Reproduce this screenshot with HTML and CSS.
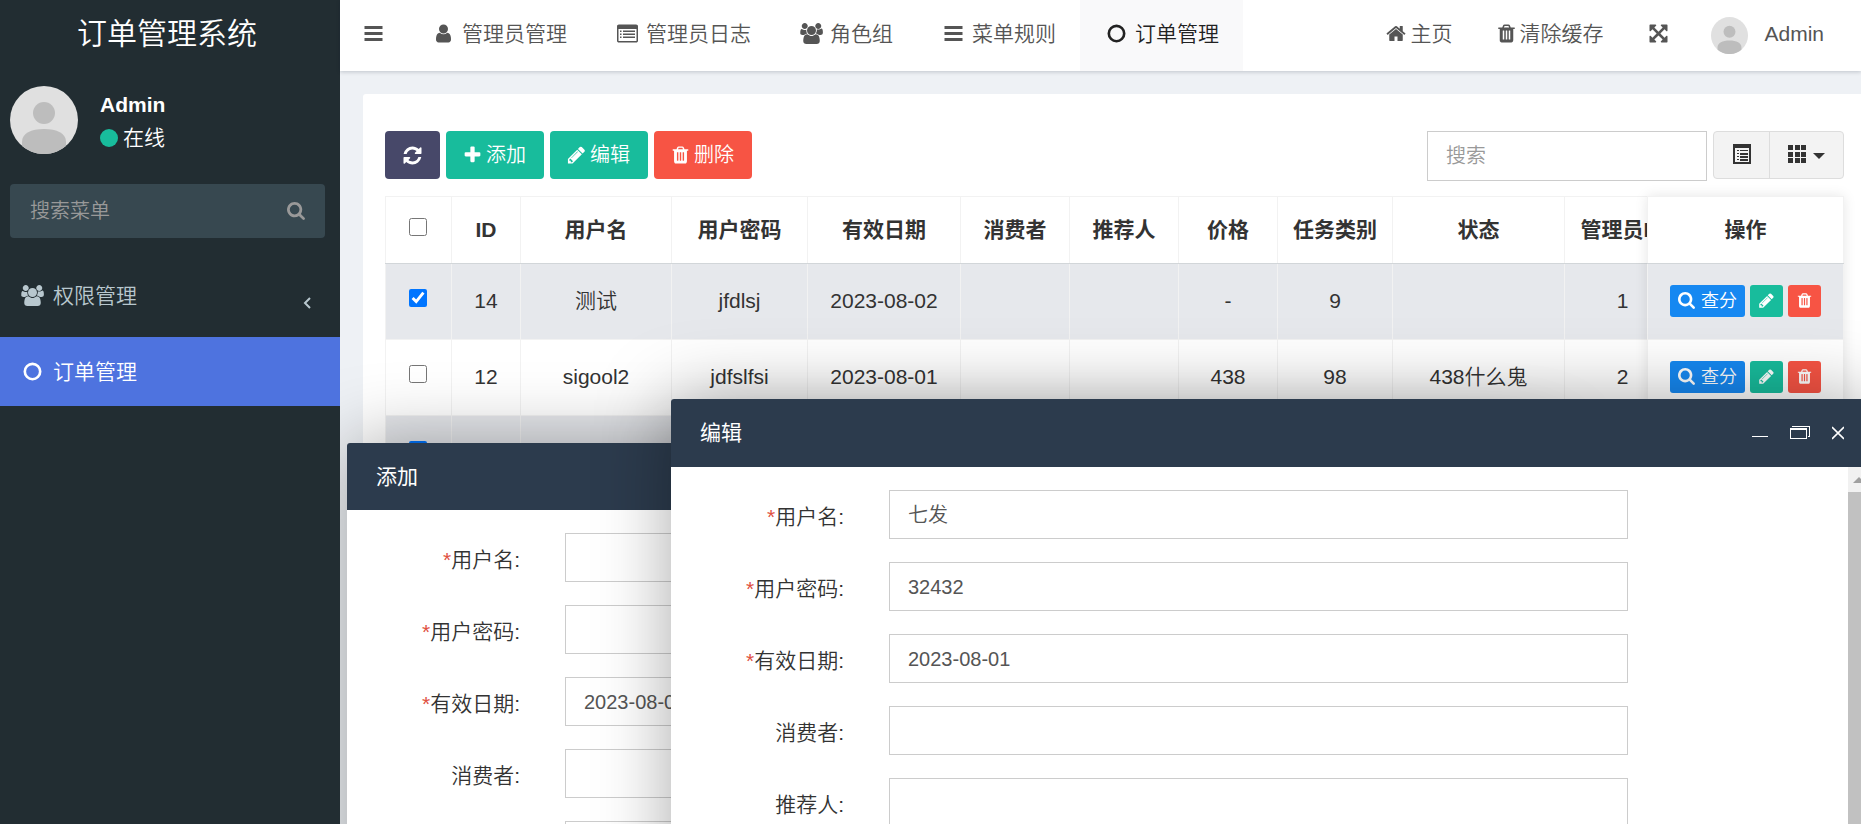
FILE: index.html
```html
<!DOCTYPE html>
<html lang="zh-CN">
<head>
<meta charset="utf-8">
<title>订单管理系统</title>
<link rel="stylesheet" href="styles.css">
</head>
<body>
<svg class="sprite" aria-hidden="true">
  <symbol id="i-bars" viewBox="0 0 1792 1792"><path d="M128 256h1536v256H128zM128 768h1536v256H128zM128 1280h1536v256H128z"/></symbol>
  <symbol id="i-user" viewBox="0 0 1792 1792"><path d="M1536 1399q0 109-62.5 187t-150.5 78h-854q-88 0-150.5-78t-62.5-187q0-85 8.5-160.5t31.5-152 58.5-131 94-89 134.5-34.5q131 128 313 128t313-128q76 0 134.5 34.5t94 89 58.5 131 31.5 152 8.5 160.5zm-256-887q0 159-112.5 271.5t-271.5 112.5-271.5-112.5-112.5-271.5 112.5-271.5 271.5-112.5 271.5 112.5 112.5 271.5z"/></symbol>
  <symbol id="i-list" viewBox="0 0 1792 1792"><path fill-rule="evenodd" d="M160 128h1472q66 0 113 47t47 113v1216q0 66-47 113t-113 47H160q-66 0-113-47T0 1504V288q0-66 47-113t113-47zM128 512v992q0 32 32 32h1472q32 0 32-32V512zM256 640h128v128H256zM512 640h1024v128H512zM256 896h128v128H256zM512 896h1024v128H512zM256 1152h128v128H256zM512 1152h1024v128H512z"/></symbol>
  <symbol id="i-group" viewBox="64 0 1920 1792"><path d="M657 896q-162 5-265 128h-134q-82 0-138-40.5t-56-118.5q0-353 124-353 6 0 43.5 21t97.5 42.5 119 21.5q67 0 133-23-5 37-5 66 0 159 93 295zm1071 637q0 120-73 189.5t-194 69.5h-874q-121 0-194-69.5t-73-189.5q0-53 3.5-103.5t14-109 26.5-108.5 43-97.5 62-81 85.5-53.5 111.5-20q10 0 43 21.5t73 48 107 48 135 21.5 135-21.5 107-48 73-48 43-21.5q61 0 111.5 20t85.5 53.5 62 81 43 97.5 26.5 108.5 14 109 3.5 103.5zm-1024-1277q0 106-75 181t-181 75-181-75-75-181 75-181 181-75 181 75 75 181zm704 384q0 159-112.5 271.5t-271.5 112.5-271.5-112.5-112.5-271.5 112.5-271.5 271.5-112.5 271.5 112.5 112.5 271.5zm576 225q0 78-56 118.5t-138 40.5h-134q-103-123-265-128 93-136 93-295 0-29-5-66 66 23 133 23 59 0 119-21.5t97.5-42.5 43.5-21q124 0 124 353zm-128-609q0 106-75 181t-181 75-181-75-75-181 75-181 181-75 181 75 75 181z"/></symbol>
  <symbol id="i-circle" viewBox="0 0 1792 1792"><circle cx="896" cy="896" r="656" fill="none" stroke="currentColor" stroke-width="224"/></symbol>
  <symbol id="i-home" viewBox="64 0 1664 1792"><path d="M1472 992v480q0 26-19 45t-45 19h-384v-384h-256v384h-384q-26 0-45-19t-19-45v-480q0-1 .5-3t.5-3l575-474 575 474q1 2 1 6zm223-69l-62 74q-8 9-21 11h-3q-13 0-21-7l-692-577-692 577q-12 8-24 7-13-2-21-11l-62-74q-8-10-7-23.5t11-21.5l719-599q32-26 76-26t76 26l244 204v-195q0-14 9-23t23-9h192q14 0 23 9t9 23v408l219 182q10 8 11 21.5t-7 23.5z"/></symbol>
  <symbol id="i-trash" viewBox="192 0 1408 1792"><path d="M704 1376v-704q0-14-9-23t-23-9h-64q-14 0-23 9t-9 23v704q0 14 9 23t23 9h64q14 0 23-9t9-23zm256 0v-704q0-14-9-23t-23-9h-64q-14 0-23 9t-9 23v704q0 14 9 23t23 9h64q14 0 23-9t9-23zm256 0v-704q0-14-9-23t-23-9h-64q-14 0-23 9t-9 23v704q0 14 9 23t23 9h64q14 0 23-9t9-23zm-544-992h448l-48-117q-7-9-17-11h-317q-10 2-17 11zm928 32v64q0 14-9 23t-23 9h-96v948q0 83-47 143.5t-113 60.5h-832q-66 0-113-58.5t-47-141.5v-952h-96q-14 0-23-9t-9-23v-64q0-14 9-23t23-9h309l70-167q15-37 54-63t79-26h320q40 0 79 26t54 63l70 167h309q14 0 23 9t9 23z"/></symbol>
  <symbol id="i-arrows" viewBox="0 0 1792 1792"><path d="M1411 541l-355 355 355 355 144-144q29-31 70-14 39 17 39 59v448q0 26-19 45t-45 19h-448q-42 0-59-40-17-39 14-69l144-144-355-355-355 355 144 144q31 30 14 69-17 40-59 40h-448q-26 0-45-19t-19-45v-448q0-42 40-59 39-17 69 14l144 144 355-355-355-355-144 144q-19 19-45 19-12 0-24-5-40-17-40-59v-448q0-26 19-45t45-19h448q42 0 59 40 17 39-14 69l-144 144 355 355 355-355-144-144q-31-30-14-69 17-40 59-40h448q26 0 45 19t19 45v448q0 42-39 59-13 5-25 5-26 0-45-19z"/></symbol>
  <symbol id="i-search" viewBox="64 128 1664 1664"><path d="M1216 832q0-185-131.5-316.5t-316.5-131.5-316.5 131.5-131.5 316.5 131.5 316.5 316.5 131.5 316.5-131.5 131.5-316.5zm512 832q0 52-38 90t-90 38q-54 0-90-38l-343-342q-179 124-399 124-143 0-273.5-55.5t-225-150-150-225-55.5-273.5 55.5-273.5 150-225 225-150 273.5-55.5 273.5 55.5 225 150 150 225 55.5 273.5q0 220-124 399l343 343q37 37 37 90z"/></symbol>
  <symbol id="i-refresh" viewBox="0 0 1792 1792"><path d="M1639 1056q0 5-1 7-64 268-268 434.5t-478 166.5q-146 0-282.5-55t-243.5-157l-129 129q-19 19-45 19t-45-19-19-45v-448q0-26 19-45t45-19h448q26 0 45 19t19 45-19 45l-137 137q71 66 161 102t187 36q134 0 250-65t186-179q11-17 53-117 8-23 30-23h192q13 0 22.5 9.5t9.5 22.5zm25-800v448q0 26-19 45t-45 19h-448q-26 0-45-19t-19-45 19-45l138-138q-148-137-349-137-134 0-250 65t-186 179q-11 17-53 117-8 23-30 23h-199q-13 0-22.5-9.5t-9.5-22.5v-7q65-268 270-434.5t480-166.5q146 0 284 55.5t245 156.5l130-129q19-19 45-19t45 19 19 45z"/></symbol>
  <symbol id="i-plus" viewBox="192 0 1408 1792"><path d="M1600 736v192q0 40-28 68t-68 28h-416v416q0 40-28 68t-68 28h-192q-40 0-68-28t-28-68v-416h-416q-40 0-68-28t-28-68v-192q0-40 28-68t68-28h416v-416q0-40 28-68t68-28h192q40 0 68 28t28 68v416h416q40 0 68 28t28 68z"/></symbol>
  <symbol id="i-pencil" viewBox="128 0 1536 1792"><path d="M491 1536l91-91-235-235-91 91v107h128v128h107zm523-928q0-22-22-22-10 0-17 7l-542 542q-7 7-7 17 0 22 22 22 10 0 17-7l542-542q7-7 7-17zm-54-192l416 416-832 832h-416v-416zm683 96q0 53-37 90l-166 166-416-416 166-165q36-38 90-38 53 0 91 38l235 234q37 39 37 91z"/></symbol>
  <symbol id="i-avatar" viewBox="0 0 68 68"><circle cx="34" cy="34" r="34" fill="#e0e0e0"/><circle cx="34" cy="27" r="11" fill="#bdbdbd"/><path fill="#bdbdbd" d="M12 60V56C12 47 21 43 34 43s22 4 22 13v4A34 34 0 0 1 12 60z"/></symbol>
</svg>

<div class="app">
  <aside class="sidebar">
    <a class="logo" href="#">订单管理系统</a>
    <div class="user-panel">
      <svg class="user-avatar"><use href="#i-avatar"/></svg>
      <div class="user-info">
        <strong>Admin</strong>
        <span class="online"><i class="dot"></i>在线</span>
      </div>
    </div>
    <form class="side-search">
      <input type="text" placeholder="搜索菜单" aria-label="搜索菜单">
      <button type="button" aria-label="搜索"><svg class="icon-s"><use href="#i-search"/></svg></button>
    </form>
    <nav class="side-menu">
      <a href="#"><svg class="icon-fw"><use href="#i-group"/></svg><span>权限管理</span>
        <svg class="chevron" viewBox="0 0 8 12"><path d="M7 1L2 6l5 5" fill="none" stroke="currentColor" stroke-width="2"/></svg></a>
      <a href="#" class="active"><svg class="icon-fw"><use href="#i-circle"/></svg><span>订单管理</span></a>
    </nav>
  </aside>

  <div class="page">
    <header class="topbar">
      <button type="button" class="nav-item toggle" aria-label="切换菜单"><svg class="icon"><use href="#i-bars"/></svg></button>
      <nav class="tabs">
        <a class="nav-item" href="#"><svg class="icon-fw"><use href="#i-user"/></svg>管理员管理</a>
        <a class="nav-item" href="#"><svg class="icon-fw"><use href="#i-list"/></svg>管理员日志</a>
        <a class="nav-item" href="#"><svg class="icon-fw"><use href="#i-group"/></svg>角色组</a>
        <a class="nav-item" href="#"><svg class="icon-fw"><use href="#i-bars"/></svg>菜单规则</a>
        <a class="nav-item active" href="#"><svg class="icon-fw"><use href="#i-circle"/></svg>订单管理</a>
      </nav>
      <nav class="tools">
        <a class="nav-item" href="#"><svg class="icon-home"><use href="#i-home"/></svg>主页</a>
        <a class="nav-item" href="#"><svg class="icon-trash"><use href="#i-trash"/></svg>清除缓存</a>
        <a class="nav-item" href="#" aria-label="全屏"><svg class="icon"><use href="#i-arrows"/></svg></a>
        <a class="nav-item account" href="#"><svg class="account-avatar"><use href="#i-avatar"/></svg>Admin</a>
      </nav>
    </header>

    <main class="content">
      <section class="panel">
        <div class="toolbar">
          <div class="actions">
            <button type="button" class="btn primary" aria-label="刷新"><svg class="icon"><use href="#i-refresh"/></svg></button>
            <button type="button" class="btn success"><svg class="icon-m"><use href="#i-plus"/></svg>添加</button>
            <button type="button" class="btn success"><svg class="icon-m"><use href="#i-pencil"/></svg>编辑</button>
            <button type="button" class="btn danger"><svg class="icon-m"><use href="#i-trash"/></svg>删除</button>
          </div>
          <div class="filters">
            <input type="text" class="search" placeholder="搜索" aria-label="搜索">
            <div class="btn-group">
              <button type="button" aria-label="切换视图"><svg class="view-icon" viewBox="0 0 18 20"><path fill-rule="evenodd" d="M0 0h18v20H0zM2 4v14h14V4zM4 6h2v1H4zM7 6h8v1H7zM4 9h2v1H4zM7 9h8v2H7zM4 12h2v1H4zM7 12h8v2H7zM4 15h2v1H4zM7 15h8v2H7z"/></svg></button>
              <button type="button" aria-label="列"><svg class="grid-icon" viewBox="0 0 18 18"><path d="M0 0h5v5H0zM7 0h5v5H7zM13 0h5v5h-5zM0 7h5v5H0zM7 7h5v5H7zM13 7h5v5h-5zM0 13h5v5H0zM7 13h5v5H7zM13 13h5v5h-5z"/></svg><svg class="caret" viewBox="0 0 12 6"><path d="M0 0h12L6 6z"/></svg></button>
            </div>
          </div>
        </div>

        <div class="table-wrap">
          <div class="table-scroll">
            <table class="grid">
              <colgroup><col class="w-check"><col class="w-id"><col class="w-name"><col class="w-pass"><col class="w-date"><col class="w-person"><col class="w-person"><col class="w-price"><col class="w-type"><col class="w-state"><col class="w-admin"></colgroup>
              <thead>
                <tr><th><input type="checkbox" aria-label="全选"></th><th>ID</th><th>用户名</th><th>用户密码</th><th>有效日期</th><th>消费者</th><th>推荐人</th><th>价格</th><th>任务类别</th><th>状态</th><th>管理员ID</th></tr>
              </thead>
              <tbody>
                <tr class="selected"><td><input type="checkbox" checked aria-label="选择 14"></td><td>14</td><td>测试</td><td>jfdlsj</td><td>2023-08-02</td><td></td><td></td><td>-</td><td>9</td><td></td><td>1</td></tr>
                <tr><td><input type="checkbox" aria-label="选择 12"></td><td>12</td><td>sigool2</td><td>jdfslfsi</td><td>2023-08-01</td><td></td><td></td><td>438</td><td>98</td><td>438什么鬼</td><td>2</td></tr>
                <tr class="selected"><td><input type="checkbox" checked aria-label="选择"></td><td></td><td></td><td></td><td></td><td></td><td></td><td></td><td></td><td></td><td></td></tr>
              </tbody>
            </table>
          </div>
          <table class="grid fixed">
            <thead><tr><th>操作</th></tr></thead>
            <tbody>
              <tr class="selected"><td><div class="row-actions"><button type="button" class="btn-xs info"><svg><use href="#i-search"/></svg>查分</button><button type="button" class="btn-xs success" aria-label="编辑"><svg><use href="#i-pencil"/></svg></button><button type="button" class="btn-xs danger" aria-label="删除"><svg><use href="#i-trash"/></svg></button></div></td></tr>
              <tr><td><div class="row-actions"><button type="button" class="btn-xs info"><svg><use href="#i-search"/></svg>查分</button><button type="button" class="btn-xs success" aria-label="编辑"><svg><use href="#i-pencil"/></svg></button><button type="button" class="btn-xs danger" aria-label="删除"><svg><use href="#i-trash"/></svg></button></div></td></tr>
              <tr class="selected"><td></td></tr>
            </tbody>
          </table>
        </div>
      </section>

      <section class="dialog dialog-add">
        <header class="dialog-head"><h2>添加</h2></header>
        <div class="dialog-body">
          <form class="form">
            <label for="a1"><i>*</i>用户名:</label><input id="a1" type="text">
            <label for="a2"><i>*</i>用户密码:</label><input id="a2" type="text">
            <label for="a3"><i>*</i>有效日期:</label><input id="a3" type="text" value="2023-08-01">
            <label for="a4">消费者:</label><input id="a4" type="text">
            <label for="a5"></label><input id="a5" type="text">
          </form>
        </div>
      </section>

      <section class="dialog dialog-edit">
        <header class="dialog-head">
          <h2>编辑</h2>
          <div class="window-buttons">
            <button type="button" aria-label="最小化"><svg width="16" height="14" viewBox="0 0 16 14"><path d="M0 10h16v1H0z"/></svg></button>
            <button type="button" aria-label="还原"><svg width="20" height="14" viewBox="0 0 20 14"><path fill-rule="evenodd" d="M0 2h17v11H0zM1 4v8h15V4zM2 0h18v11h-2v-1h1V1H2z"/></svg></button>
            <button type="button" aria-label="关闭"><svg width="12" height="14" viewBox="0 0 12 14"><path d="M0 1l12 12M12 1L0 13" fill="none" stroke="currentColor" stroke-width="1.6"/></svg></button>
          </div>
        </header>
        <div class="dialog-body">
          <form class="form">
            <label for="e1"><i>*</i>用户名:</label><input id="e1" type="text" value="七发">
            <label for="e2"><i>*</i>用户密码:</label><input id="e2" type="text" value="32432">
            <label for="e3"><i>*</i>有效日期:</label><input id="e3" type="text" value="2023-08-01">
            <label for="e4">消费者:</label><input id="e4" type="text">
            <label for="e5">推荐人:</label><input id="e5" type="text">
          </form>
          <div class="scrollbar" aria-hidden="true">
            <svg width="25" height="25" viewBox="0 0 25 25"><path d="M5 16l6-6 6 6z"/></svg>
            <div class="thumb"></div>
          </div>
        </div>
      </section>
    </main>
  </div>
</div>
</body>
</html>
```

FILE: styles.css
```css
* { box-sizing: border-box; }

body {
  margin: 0;
  font: 350 21px/30px "Liberation Sans", "Noto Sans CJK SC", sans-serif;
  color: #333;
}

a { color: inherit; text-decoration: none; }
button, input { font: inherit; }
button { margin: 0; padding: 0; border: 0; background: none; color: inherit; }
svg { flex: none; fill: currentColor; }

.sprite { display: none; }

.app { display: flex; height: 100vh; overflow: hidden; }

/* Sidebar */
.sidebar { flex: none; width: 340px; background: #222d32; color: #fff; }
.logo { display: flex; align-items: center; justify-content: center; height: 68px; padding-right: 6px; font-size: 30px; }
.user-panel { display: flex; gap: 22px; padding: 18px 10px 30px; }
.user-avatar { width: 68px; height: 68px; }
.user-info { display: flex; flex-direction: column; gap: 3px; padding-top: 4px; }
.user-info strong { font-weight: 700; }
.online { display: flex; align-items: center; gap: 5px; }
.dot { width: 18px; height: 18px; border-radius: 50%; background: #18bc9c; }
.side-search { display: flex; align-items: center; height: 54px; margin: 0 15px 30px 10px; padding: 0 20px; border-radius: 4px; background: #374850; color: #999; }
.side-search input { flex: 1; min-width: 0; padding: 0; border: 0; outline: 0; background: none; color: #fff; font-size: 20px; }
.side-search button { display: flex; }
.side-search input::placeholder { color: #999; }
.side-menu a { display: flex; align-items: center; gap: 7px; height: 69px; padding: 0 29px 0 19px; color: #b8c7ce; }
.side-menu a:first-child { padding-bottom: 14px; }
.side-menu a.active { background: #4e73df; color: #fff; }
.side-menu .chevron { width: 8px; height: 12px; margin: 14px 0 0 auto; }

.icon { width: 21px; height: 21px; }
.icon-fw { width: 27px; height: 21px; }
.icon-s { width: 18px; height: 18px; }
.icon-m { width: 19px; height: 20px; }
.icon-home { width: 20px; height: 21px; }
.icon-trash { width: 17px; height: 21px; }

/* Top bar */
.page { flex: 1; min-width: 0; display: flex; flex-direction: column; }
.topbar { position: relative; z-index: 1; flex: none; display: flex; height: 71px; background: #fff; color: #555; box-shadow: 0 1px 4px rgba(0, 21, 41, .2); }
.tabs, .tools { display: flex; }
.tools { margin-left: auto; }
.nav-item { display: flex; align-items: center; gap: 5px; padding: 0 23px 4px; white-space: nowrap; }
.tabs .nav-item { padding-right: 24px; }
.tools .nav-item { gap: 4px; }
.tabs .active { background: #f9f9fa; color: #222; }
.tools .nav-item:nth-child(3) { padding-left: 22px; }
.tools .account { gap: 16px; padding: 0 37px 4px 19px; }
.account-avatar { width: 37px; height: 37px; margin-top: 4px; }

/* List panel */
.content { position: relative; flex: 1; min-height: 0; overflow: hidden; padding: 23px 0 0 23px; background: #eef1f5; }
.panel { height: 100%; padding: 37px 17px 0 22px; border-top-left-radius: 3px; background: #fff; }
.toolbar { display: flex; justify-content: space-between; height: 65px; }
.actions, .filters { display: flex; align-items: flex-start; gap: 6px; }
.btn { display: flex; align-items: center; gap: 4px; height: 48px; padding: 0 18px 0 17px; border-radius: 4px; color: #fff; font-size: 20px; }
.btn.primary { padding: 0 17px; }
.primary { background: #474869; }
.success { background: #18bc9c; }
.danger { background: #f75444; }
.info { background: #1688f1; }
.search { width: 280px; height: 50px; padding: 0 18px; border: 1px solid #ccc; font-size: 20px; }
.search::placeholder { color: #999; }
.btn-group { display: flex; height: 48px; border: 1px solid #ddd; border-radius: 4px; background: #f3f3f3; }
.btn-group button { display: flex; align-items: center; gap: 7px; padding: 0 18px 3px 19px; }
.btn-group button + button { padding-left: 18px; border-left: 1px solid #ddd; }
.view-icon { width: 18px; height: 20px; }
.grid-icon { width: 18px; height: 18px; }
.caret { width: 12px; height: 6px; margin-top: 4px; }

.table-wrap { display: flex; }
.table-scroll { flex: 1; min-width: 0; overflow: hidden; }
.grid { width: 1295px; table-layout: fixed; border-collapse: collapse; text-align: center; white-space: nowrap; }
.grid th, .grid td { padding: 0 0 2px; border: 1px solid #f2f2f2; }
.grid th { height: 67px; padding: 0; font-weight: 700; border-bottom-color: #d2d6d9; }
.grid td { height: 76px; }
.grid .selected { background: #e6e8ec; }
.grid input { width: 18px; height: 18px; margin: 0 2px 0 0; vertical-align: 1px; accent-color: #0075ff; }
.grid.fixed { position: relative; flex: none; width: 197px; background: #fff; box-shadow: 0 0 12px rgba(0, 0, 0, .1); }
.w-check { width: 66px; }
.w-id { width: 69px; }
.w-name { width: 151px; }
.w-pass { width: 136px; }
.w-date { width: 153px; }
.w-person { width: 109px; }
.w-price { width: 99px; }
.w-type { width: 115px; }
.w-state { width: 172px; }
.w-admin { width: 116px; }
.row-actions { display: flex; justify-content: center; gap: 5px; }
.btn-xs { display: flex; align-items: center; gap: 6px; height: 32px; padding: 0 8px; border-radius: 3px; color: #fff; font-size: 18px; }
.btn-xs svg { width: 17px; height: 17px; }

/* Floating dialogs */
.dialog { position: absolute; width: 1202px; height: 600px; display: flex; flex-direction: column; border-radius: 3px; background: #fff; box-shadow: 1px 1px 75px rgba(0, 0, 0, .35); }
.dialog-add { left: 7px; top: 372px; }
.dialog-edit { left: 331px; top: 328px; }
.dialog-head { flex: none; display: flex; align-items: center; justify-content: space-between; height: 67px; padding: 0 29px; border-radius: 3px 3px 0 0; background: #2c3b4d; color: #fff; }
.dialog-edit .dialog-head { height: 68px; }
.dialog-head h2 { margin: 0; font-size: 21px; font-weight: 400; }
.window-buttons { display: flex; gap: 22px; }
.window-buttons button { display: flex; }
.dialog-body { flex: 1; min-height: 0; display: flex; overflow: hidden; }
.form { flex: 1; display: grid; grid-template-columns: 173px 1fr; grid-auto-rows: 49px; gap: 23px 45px; padding: 23px 220px 0 0; }
.dialog-add .form { padding-right: 245px; }
.form label { padding-top: 12px; text-align: right; }
.form label i { color: #e0503f; font-style: normal; }
.form input { min-width: 0; padding: 0 18px; border: 1px solid #ccc; color: #555; font-size: 20px; }
.scrollbar { flex: none; display: flex; flex-direction: column; width: 25px; background: #f1f1f1; color: #a0a0a0; }
.thumb { flex: 1; background: #c1c1c1; }
```
